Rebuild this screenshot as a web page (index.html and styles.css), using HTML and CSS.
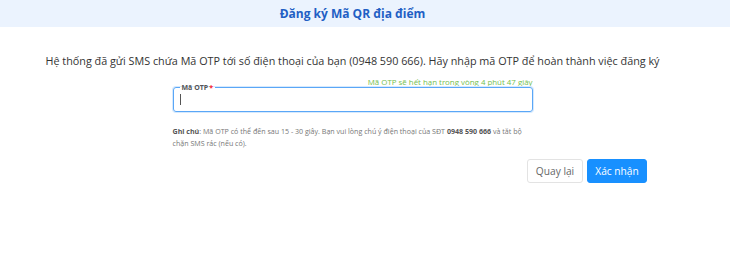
FILE: index.html
```html
<!DOCTYPE html>
<html lang="vi">
<head>
<meta charset="utf-8">
<link rel="stylesheet" href="styles.css">
</head>
<body>
<div class="page">
  <header class="header">
    <h1 class="title">Đăng ký Mã QR địa điểm</h1>
  </header>
  <main class="content">
    <p class="intro">Hệ thống đã gửi SMS chứa Mã OTP tới số điện thoại của bạn (0948 590 666). Hãy nhập mã OTP để hoàn thành việc đăng ký</p>
    <div class="form">
      <div class="timer">Mã OTP sẽ hết hạn trong vòng 4 phút 47 giây</div>
      <fieldset class="field">
        <legend class="legend">Mã OTP<span class="req">*</span></legend>
        <span class="caret"></span>
      </fieldset>
      <p class="note"><b>Ghi chú</b>: Mã OTP có thể đến sau 15 - 30 giây. Bạn vui lòng chú ý điện thoại của SĐT <b>0948 590 666</b> và tắt bộ chặn SMS rác (nếu có).</p>
    </div>
    <div class="actions">
      <button class="btn btn-default">Quay lại</button>
      <button class="btn btn-primary">Xác nhận</button>
    </div>
  </main>
</div>
</body>
</html>
```
FILE: styles.css
```css
* { box-sizing: border-box; }
html, body { margin: 0; padding: 0; background: #fff; }
body { font-family: "Open Sans", "Noto Sans", sans-serif; color: #333; }
.page { width: 730px; height: 278px; padding-right: 25px; }
.header {
  height: 27px;
  background: #ebf3fe;
  display: flex;
  align-items: center;
  justify-content: center;
  margin-right: -25px;
  padding-right: 25px;
}
.title {
  margin: 0;
  font-size: 12px;
  font-weight: 700;
  color: #1f5fc4;
  line-height: 16px;
}
.content { display: flex; flex-direction: column; align-items: center; }
.intro {
  margin: 25px 0 0;
  font-size: 10.8px;
  line-height: 17px;
  color: #333;
  white-space: nowrap;
}
.form { width: 360px; margin-top: 8px; display: flex; flex-direction: column; }
.timer {
  align-self: flex-end;
  font-size: 7.9px;
  line-height: 10px;
  color: #73c04f;
}
.field {
  margin: -4px 0 0;
  height: 29px;
  border: 1px solid #5aa7f7;
  border-radius: 3px;
  box-shadow: 0 0 0 1px #d6e9fd;
  padding: 0 6px;
}
.legend {
  padding: 0 2px;
  font-size: 7px;
  font-weight: 700;
  color: #555;
  line-height: 9px;
}
.req { color: #f5222d; margin-left: 1px; }
.caret {
  display: block;
  width: 1px;
  height: 11px;
  background: #555;
  margin-top: 2px;
}
.note {
  margin: 13px 0 0;
  font-size: 7.1px;
  line-height: 12px;
  color: #777;
}
.note b { color: #555; }
.actions {
  align-self: stretch;
  display: flex;
  justify-content: flex-end;
  gap: 4px;
  margin-top: 10px;
  padding-right: 58px;
}
.btn {
  height: 24px;
  border-radius: 3px;
  font-family: "Open Sans", "Noto Sans", sans-serif;
  font-size: 10.2px;
  padding: 0;
  white-space: nowrap;
  cursor: pointer;
}
.btn-default { background: #fff; border: 1px solid #e3e3e3; color: #666; width: 56px; }
.btn-primary { background: #1890ff; border: 1px solid #1890ff; color: #fff; width: 60px; }
```
